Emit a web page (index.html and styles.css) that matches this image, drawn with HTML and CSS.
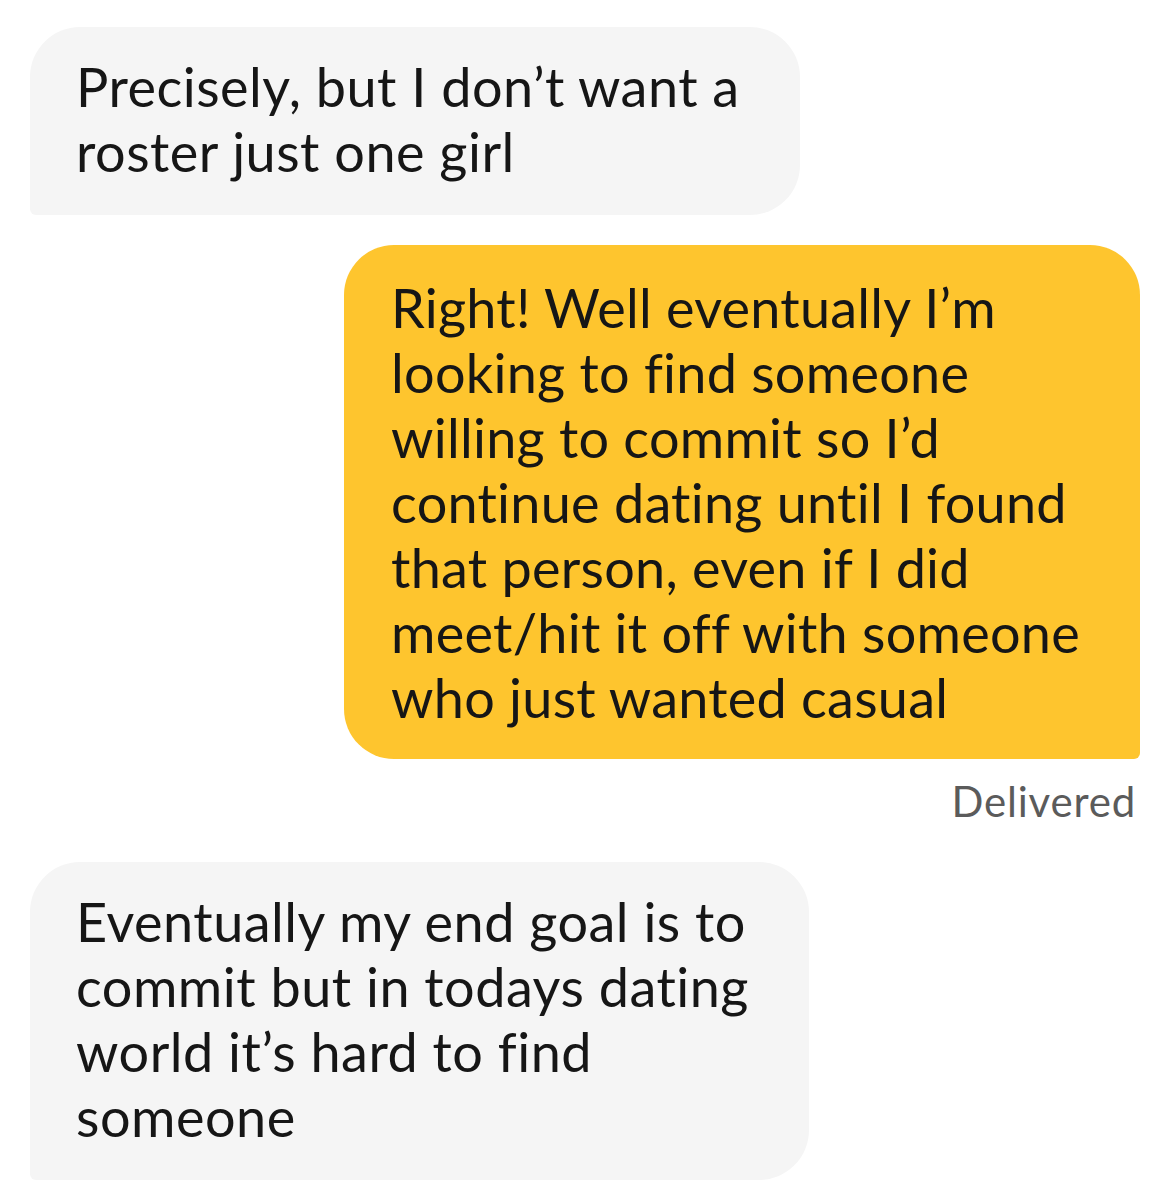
FILE: index.html
```html
<!DOCTYPE html>
<html lang="en">
  <head>
    <meta charset="UTF-8" />
    <meta name="viewport" content="width=device-width, initial-scale=1.0" />
    <title>Chat</title>
    <link rel="stylesheet" href="styles.css">
  </head>

  <body>
    <div id="chat">
      <div class="msg msg-in">
        Precisely, but I don’t want a<br />roster just one girl
      </div>

      <div class="msg msg-out">
        Right! Well eventually I’m<br />looking to find someone<br />willing to commit so I’d<br />continue dating until I found<br />that person, even if I did<br />meet/hit it off with someone<br />who just wanted casual
      </div>
      <div class="status">Delivered</div>

      <div class="msg msg-in last">
        Eventually my end goal is to<br />commit but in todays dating<br />world it’s hard to find<br />someone
      </div>
    </div>
  </body>
</html>
```

FILE: styles.css
```css
body {
  margin: 0;
  background: #fff;
  font-family: Lato, "Noto Sans", sans-serif;
}

#chat {
  display: flex;
  flex-direction: column;
  padding: 27px 30px 0 30px;
}

.msg {
  width: fit-content;
  font-size: 54px;
  line-height: 65px;
  letter-spacing: 0.5px;
  color: #161616;
  padding: 27px 60px 31px 46px;
  border-radius: 50px;
}

.msg-in {
  align-self: flex-start;
  background-color: #f5f5f5;
  border-bottom-left-radius: 6px;
}

.msg-out {
  align-self: flex-end;
  background-color: #fec52e;
  border-bottom-right-radius: 6px;
  letter-spacing: 0.25px;
  margin-top: 30px;
  padding-top: 30px;
  padding-bottom: 29px;
  padding-left: 47px;
}

.status {
  align-self: flex-end;
  margin-top: 17px;
  margin-right: 4px;
  font-size: 42px;
  letter-spacing: 0.8px;
  color: #5b5b5b;
}

.last {
  margin-top: 36px;
}
```
